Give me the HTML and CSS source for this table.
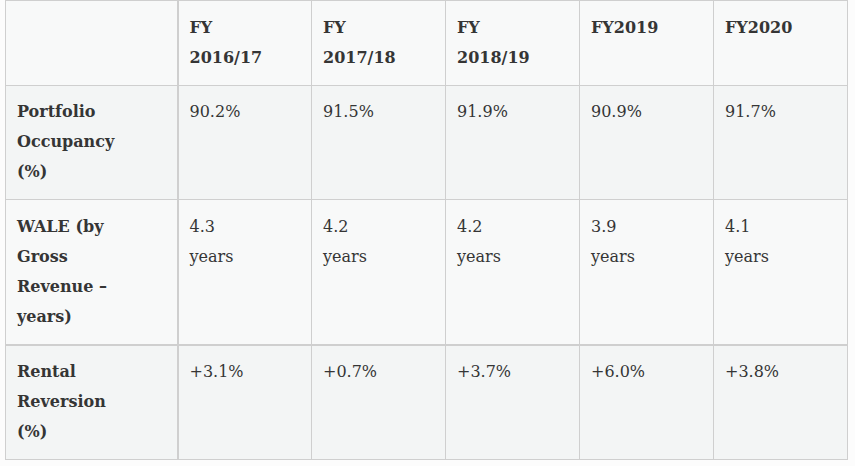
FILE: index.html
```html
<!DOCTYPE html>
<html lang="en">
<head>
<meta charset="utf-8">
<title>Portfolio metrics</title>
<link rel="stylesheet" href="styles.css">
</head>
<body>
<table class="metrics">
  <colgroup>
    <col class="col-label">
    <col class="col-year"><col class="col-year"><col class="col-year"><col class="col-year"><col class="col-year">
  </colgroup>
  <thead>
    <tr class="row-light">
      <th></th>
      <th>FY<br>2016/17</th>
      <th>FY<br>2017/18</th>
      <th>FY<br>2018/19</th>
      <th>FY2019</th>
      <th>FY2020</th>
    </tr>
  </thead>
  <tbody>
    <tr class="row-dark">
      <th>Portfolio<br>Occupancy<br>(%)</th>
      <td>90.2%</td>
      <td>91.5%</td>
      <td>91.9%</td>
      <td>90.9%</td>
      <td>91.7%</td>
    </tr>
    <tr class="row-light">
      <th>WALE (by<br>Gross<br>Revenue –<br>years)</th>
      <td>4.3<br>years</td>
      <td>4.2<br>years</td>
      <td>4.2<br>years</td>
      <td>3.9<br>years</td>
      <td>4.1<br>years</td>
    </tr>
    <tr class="row-dark row-split">
      <th>Rental<br>Reversion<br>(%)</th>
      <td>+3.1%</td>
      <td>+0.7%</td>
      <td>+3.7%</td>
      <td>+6.0%</td>
      <td>+3.8%</td>
    </tr>
  </tbody>
</table>
</body>
</html>
```

FILE: styles.css
```css
html, body {
  margin: 0;
  padding: 0;
  background: #fcfcfc;
}

body {
  font-family: "DejaVu Serif", "Liberation Serif", serif;
  font-size: 16px;
  line-height: 30px;
  color: #353535;
}

.metrics {
  margin-left: 5px;
  width: 843px;
  table-layout: fixed;
  border-collapse: collapse;
  border: 1px solid #cfcfcf;
}

.col-label { width: 172px; }
.col-year { width: 134px; }

.metrics th,
.metrics td {
  border: 1px solid #cfcfcf;
  padding: 11.5px 12px 12px 11px;
  text-align: left;
  vertical-align: top;
}

.metrics th {
  font-weight: bold;
}

.metrics td {
  font-weight: normal;
}

.metrics tr > :first-child {
  border-right: 2px solid #cfcfcf;
}

.row-light { background: #f8f9f9; }
.row-dark { background: #f3f5f5; }

.row-split > th,
.row-split > td {
  border-top: 2px solid #cfcfcf;
}
```
